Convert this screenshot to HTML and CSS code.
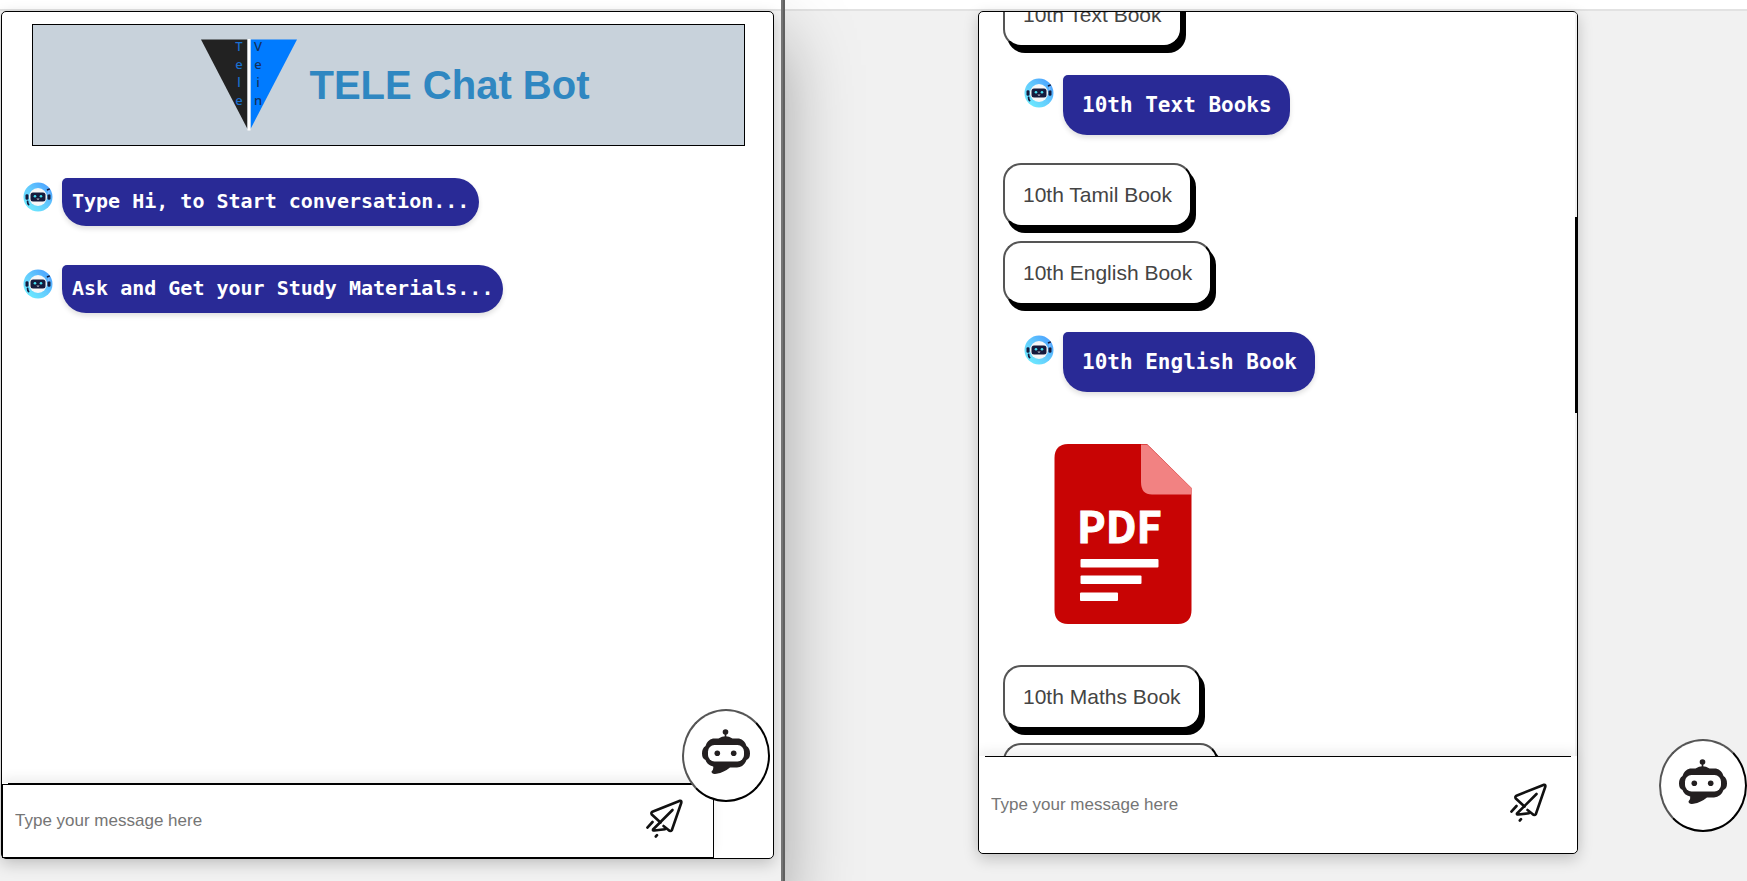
FILE: index.html
```html
<!DOCTYPE html>
<html lang="en">
<head>
<meta charset="utf-8">
<title>TELE Chat Bot</title>
<link rel="stylesheet" href="styles.css">
</head>
<body>
<svg class="sprite" aria-hidden="true">
  <defs>
    <linearGradient id="ring" x1="0" y1="1" x2="1" y2="0">
      <stop offset="0" stop-color="#6ff3ff"/>
      <stop offset="0.5" stop-color="#63cbfd"/>
      <stop offset="1" stop-color="#4596ff"/>
    </linearGradient>
    <symbol id="avatar" viewBox="0 0 30 30">
      <circle cx="15" cy="15" r="14.5" fill="url(#ring)"/>
      <circle cx="15" cy="15" r="9" fill="#f7f7f7"/>
      <rect x="7.5" y="10.5" width="15" height="9" rx="2.5" fill="#151a3c"/>
      <circle cx="12" cy="14.2" r="1.3" fill="#45dff0"/>
      <circle cx="18" cy="14.2" r="1.3" fill="#45dff0"/>
      <path d="M13.8 16.8q1.2 1 2.4 0" stroke="#fff" stroke-width=".8" fill="none"/>
      <rect x="2.5" y="12.3" width="3" height="5.4" rx="1.3" fill="#151a3c"/>
      <rect x="24.5" y="12.3" width="3" height="5.4" rx="1.3" fill="#151a3c"/>
      <path d="M25.8 8v4.500" stroke="#9fc4ff" stroke-width=".8"/>
      <path d="M24.5 7.8l1.6-.6" stroke="#151a3c" stroke-width="1.6" stroke-linecap="round"/>
      <path d="M4.600 19.500q0 2.400 1 3" stroke="#151a3c" stroke-width="1.800" fill="none" stroke-linecap="round"/>
    </symbol>
    <symbol id="bot" viewBox="0 0 48 46">
      <g fill="#231f20">
        <circle cx="23.500" cy="3" r="2.800"/>
        <rect x="22.700" y="4" width="1.600" height="6"/>
        <path d="M16.500 9.500Q23.500 5 30.500 9.500L37 9.500Q43 11 44.500 17Q48 19 48 24.500Q48 29.500 44.500 31Q42 38 35 38.500L28 38.500Q22 43.500 14.500 44.800Q9.500 45.500 9.500 42.500Q11.800 40.500 11.200 37.500Q5 36 3.500 31Q0 29.500 0 24.500Q0 19 3.500 17Q5 11 11 9.500Z"/>
      </g>
      <rect x="6" y="16" width="36" height="16.500" rx="6.500" fill="#fff"/>
      <circle cx="15.300" cy="24.200" r="2.800" fill="#231f20"/>
      <circle cx="31.700" cy="24.200" r="2.800" fill="#231f20"/>
    </symbol>
    <symbol id="plane" viewBox="0 0 37 40">
      <g fill="none" stroke="#111" stroke-width="2.600" stroke-linecap="round" stroke-linejoin="round">
        <path d="M14.500 23.500L5.800 15.500Q4.500 13.500 7 12.500L34 1.800Q35.800 1.500 35.300 3.800L25.800 31.200Q24.500 33 22.500 31L17.500 27"/>
        <path d="M26.500 11L7 30.500Q6.500 31.800 8.500 31.500L19 30.200"/>
        <path d="M1.400 28.600L6.500 23M9.800 37.500L11 36.200"/>
      </g>
    </symbol>
  </defs>
</svg>

<main class="screens">
  <section class="pane pane-front">
    <div class="strip"></div>
    <div class="card">
      <div class="thread">
        <header class="banner">
          <svg class="logo" viewBox="0 0 96 92" role="img" aria-label="Tele Vein">
            <path d="M0 0.500H46.500V90Z" fill="#222"/>
            <path d="M49.500 0.500H96L49.500 90Z" fill="#007bff"/>
            <rect x="46.500" y="0" width="3" height="91.500" fill="#fff"/>
            <g class="logo-tele"><text x="38" y="12">T</text><text x="38" y="30">e</text><text x="38" y="48">l</text><text x="38" y="66">e</text></g>
            <g class="logo-vein"><text x="57" y="12">V</text><text x="57" y="30">e</text><text x="57" y="48">i</text><text x="57" y="66">n</text></g>
          </svg>
          <h1 class="title">TELE Chat Bot</h1>
        </header>
        <div class="message">
          <svg class="avatar"><use href="#avatar"/></svg>
          <p class="bubble">Type Hi, to Start conversation...</p>
        </div>
        <div class="message">
          <svg class="avatar"><use href="#avatar"/></svg>
          <p class="bubble">Ask and Get your Study Materials...</p>
        </div>
      </div>
      <form class="composer composer-boxed">
        <div class="field">
          <input class="entry" type="text" placeholder="Type your message here" aria-label="Message">
          <button class="send" type="button" aria-label="Send"><svg class="plane"><use href="#plane"/></svg></button>
        </div>
      </form>
      <button class="launcher launcher-front" type="button" aria-label="Toggle chat"><svg class="bot"><use href="#bot"/></svg></button>
    </div>
  </section>
  <div class="divider"></div>
  <section class="pane pane-back">
    <div class="strip"></div>
    <div class="card">
      <div class="viewport">
        <div class="thread thread-scrolled">
          <button class="option" type="button">10th Text Book</button>
          <div class="message message-reply">
            <svg class="avatar"><use href="#avatar"/></svg>
            <p class="bubble bubble-large">10th Text Books</p>
          </div>
          <div class="options">
            <button class="option" type="button">10th Tamil Book</button>
            <button class="option" type="button">10th English Book</button>
          </div>
          <div class="message message-reply">
            <svg class="avatar"><use href="#avatar"/></svg>
            <p class="bubble bubble-large">10th English Book</p>
          </div>
          <a class="document" href="#pdf" aria-label="Open PDF">
            <svg class="pdf" viewBox="0 0 138 180">
              <path d="M14 0H93L137.500 44V166Q137.500 179.500 124 180H14Q0.500 179.500 0.500 166V14Q0.500 0.500 14 0Z" fill="#c80404"/>
              <path d="M87 0.500H93L137.500 44V50.500H98Q87 50.500 87 38Z" fill="#f28282"/>
              <text class="pdf-label" x="23" y="99">PDF</text>
              <g fill="#fff">
                <rect x="26.500" y="115" width="78" height="8.500" rx="1"/>
                <rect x="26.500" y="131.500" width="61" height="8.500" rx="1"/>
                <rect x="26" y="148.500" width="38" height="8.500" rx="1"/>
              </g>
            </svg>
          </a>
          <div class="options">
            <button class="option" type="button">10th Maths Book</button>
            <button class="option" type="button">10th Science Book</button>
          </div>
        </div>
        <div class="track"><div class="thumb"></div></div>
      </div>
      <form class="composer composer-plain">
        <div class="field">
          <input class="entry" type="text" placeholder="Type your message here" aria-label="Message">
          <button class="send" type="button" aria-label="Send"><svg class="plane"><use href="#plane"/></svg></button>
        </div>
      </form>
    </div>
    <button class="launcher launcher-back" type="button" aria-label="Toggle chat"><svg class="bot"><use href="#bot"/></svg></button>
  </section>
</main>
</body>
</html>
```

FILE: styles.css
```css
* { box-sizing: border-box; }

body {
  margin: 0;
  background: #f1f1f1;
  font-family: "Liberation Sans", Arial, sans-serif;
}

.sprite { position: absolute; width: 0; height: 0; }

.screens {
  display: grid;
  grid-template-columns: minmax(0, 781fr) 4px minmax(0, 962fr);
  height: 100vh;
  overflow: hidden;
}

.pane {
  position: relative;
  display: flex;
  flex-direction: column;
  min-height: 0;
  background: #f1f1f1;
}

.pane-front {
  z-index: 1;
  box-shadow: 0 40px 70px rgba(0, 0, 0, 0.36);
}

.divider {
  z-index: 2;
  background: #747474;
  border-right: 2px solid #606060;
}

.strip {
  flex: none;
  height: 11px;
  background: #fff;
  border-bottom: 2px solid #e2e2e2;
}

.card {
  position: relative;
  display: flex;
  flex-direction: column;
  flex: 1;
  min-height: 0;
  background: #fff;
  border: 1px solid #000;
  border-radius: 5px;
  box-shadow: 0 5px 15px rgba(0, 0, 0, 0.2);
}

.pane-front .card { margin: 0 7px 22px 1px; }

.pane-back { padding-bottom: 27px; }

.pane-back .card {
  width: 600px;
  max-width: 100%;
  align-self: center;
  left: 12px;
}

.thread { flex: 1; min-height: 0; }

.pane-front .thread { padding: 12px 28px 0 21px; }

.banner {
  display: flex;
  align-items: flex-start;
  justify-content: center;
  gap: 13px;
  height: 122px;
  margin-left: 9px;
  padding: 14px 0 0 13px;
  background: #c8d2db;
  border: 1px solid #000;
}

.logo { flex: none; width: 96px; height: 92px; overflow: visible; }

.logo text { font: 500 13px "Noto Sans", sans-serif; text-anchor: middle; }
.logo-tele { fill: #1a6fd0; }
.logo-vein { fill: #14305a; }

.title {
  margin: 0;
  padding-top: 23px;
  color: #2f87c1;
  font-size: 40px;
  line-height: 46px;
}

.message {
  display: flex;
  align-items: flex-start;
  gap: 9px;
}

.pane-front .message { margin-top: 39px; }
.pane-front .banner + .message { margin-top: 32px; }

.avatar { flex: none; width: 30px; height: 30px; margin-top: 4px; }

.bubble {
  margin: 0;
  padding: 11px 10px 13px;
  background: #292a96;
  border-radius: 5px 24px 24px 24px;
  box-shadow: 0 3px 5px rgba(0, 0, 0, 0.12);
  color: #fff;
  font: bold 20px/24px "DejaVu Sans Mono", monospace;
}

.bubble-large { padding: 18px 18px 18px 19px; font-size: 21px; }

.viewport {
  position: relative;
  flex: 1;
  min-height: 0;
  overflow: hidden;
  border-radius: 4px 4px 0 0;
}

.thread-scrolled {
  display: flex;
  flex-direction: column;
  align-items: flex-start;
  margin-top: -29px;
  padding-left: 24px;
}

.message-reply { margin: 28px 0 28px 21px; }
.message-reply .avatar { margin-top: 3px; }
.options + .message-reply { margin-top: 27px; }

.options {
  display: flex;
  flex-direction: column;
  align-items: flex-start;
  gap: 14px;
}

.option {
  padding: 18px;
  background: #fff;
  border: 2px solid #000;
  border-color: #555 #000 #000 #555;
  border-radius: 18px;
  box-shadow: 4px 6px 0 #000;
  color: #444;
  font: 21px/24px "Liberation Sans", Arial, sans-serif;
}

.document { margin: 24px 0 41px 51px; }

.pdf { display: block; width: 138px; height: 180px; }

.pdf-label {
  fill: #fff;
  stroke: #fff;
  stroke-width: 1px;
  font: bold 43px "Noto Sans CJK SC", sans-serif;
}

.track {
  position: absolute;
  top: 0;
  right: 0;
  width: 2px;
  height: 100%;
  background: #f1f1f1;
}

.thumb { margin-top: 205px; height: 196px; background: #000; }

.composer {
  position: relative;
  flex: none;
  margin: 0;
  background: #fff;
  border-radius: 0 0 5px 5px;
  box-shadow: 0 -5px 12px rgba(0, 0, 0, 0.07);
}

.composer::before {
  content: "";
  display: block;
  height: 1px;
  margin: 0 6px;
  background: #000;
}

.composer-boxed { margin-right: 59px; }

.field {
  display: flex;
  align-items: center;
  height: 96px;
  padding: 0 30px 0 12px;
}

.composer-boxed .field {
  height: 74px;
  border: 1px solid #000;
}

.entry {
  flex: 1;
  min-width: 0;
  padding: 0;
  border: 0;
  outline: 0;
  background: none;
  font: 17px/24px "Liberation Sans", Arial, sans-serif;
}

.entry::placeholder { color: #757575; }

.send { padding: 0; border: 0; background: none; }

.plane { display: block; width: 37px; height: 40px; margin-bottom: 4px; }

.launcher {
  position: absolute;
  width: 88px;
  height: 93px;
  padding: 0 0 8px;
  background: #fff;
  border: 2px solid #000;
  border-color: #555 #000 #000 #555;
  border-radius: 50%;
}

.launcher-front { right: 3px; bottom: 56px; }
.launcher-back { right: 0; bottom: 49px; }

.bot { display: block; width: 48px; height: 46px; margin: 0 auto; }
```
